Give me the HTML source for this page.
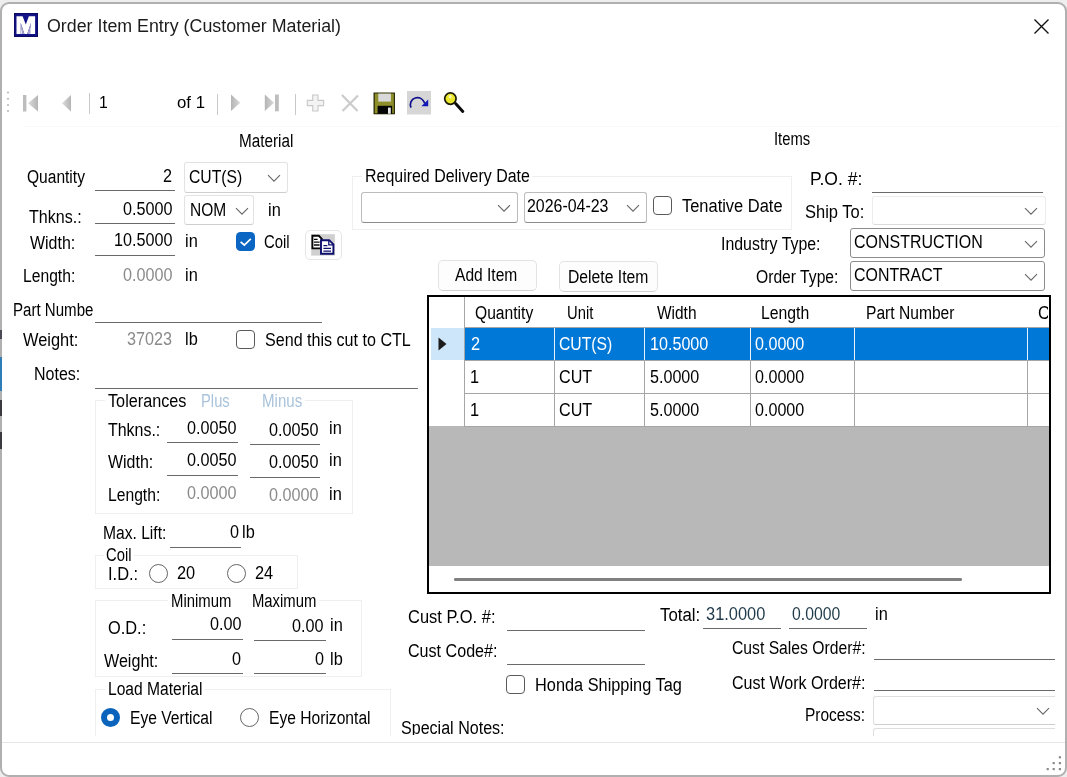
<!DOCTYPE html>
<html><head><meta charset="utf-8"><title>Order Item Entry</title>
<style>
html,body{margin:0;padding:0;}
body{width:1067px;height:777px;overflow:hidden;position:relative;background:#eeeeee;font-family:"Liberation Sans",sans-serif;}
.t{position:absolute;white-space:nowrap;line-height:20px;transform-origin:0 50%;display:block;}
.b{position:absolute;box-sizing:border-box;}
svg{position:absolute;overflow:visible;}
#w{position:absolute;left:0;top:0;width:1067px;height:777px;will-change:transform;}
</style></head><body><div id="w">
<div class="b" style="left:0px;top:2.2px;width:1067px;height:774.8px;background:#fff;border:2px solid #b0b0b0;border-radius:9px;"></div>
<div class="b" style="left:2px;top:741.5px;width:1063px;height:1px;background:#e7e7e7;"></div>
<svg style="left:14px;top:12.9px" width="24" height="24" viewBox="0 0 24 24"><rect width="24" height="24" fill="#0a0a64"/><rect x="1.2" y="1.2" width="21.6" height="21.6" fill="#14148a"/><path d="M2.5 20.9V3.2H8.6L11.8 11.6L14.9 3.2H21.1V20.9H16.9V10L13.2 20.9H10.4L6.7 10V20.9z" fill="#fff"/><path d="M6.7 10L10.4 20.9H8.4z M16.9 10L13.2 20.9H15.2z" fill="#a9a6d2"/><path d="M6.7 10L8.4 20.9H6.7z M16.9 10L15.2 20.9H16.9z" fill="#e6e5f4"/></svg>
<span class="t" style="left:47.0px;top:15.9px;font-size:17.5px;color:#1c1c1c;transform:scaleX(1.0180);">Order Item Entry (Customer Material)</span>
<svg style="left:1034px;top:19px" width="15" height="15" viewBox="0 0 15 15"><path d="M0.5 0.5L14.5 14.5M14.5 0.5L0.5 14.5" stroke="#111" stroke-width="1.4" fill="none"/></svg>
<svg style="left:0;top:88px" width="480" height="30" viewBox="0 88 480 30"><defs><linearGradient id="tg" x1="0" x2="1"><stop offset="0" stop-color="#dcdcdc"/><stop offset="1" stop-color="#b4b4b4"/></linearGradient><linearGradient id="tg2" x1="0" x2="1"><stop offset="0" stop-color="#b4b4b4"/><stop offset="1" stop-color="#d8d8d8"/></linearGradient></defs><g fill="#b5b5b5"><circle cx="8" cy="92.5" r="1"/><circle cx="8" cy="98.7" r="1"/><circle cx="8" cy="104.9" r="1"/><circle cx="8" cy="111" r="1"/></g><rect x="23" y="95" width="3.4" height="16.5" fill="#bdbdbd"/><path d="M38 95v16.5l-10-8.25z" fill="url(#tg)"/><path d="M71 95v16.5l-9-8.25z" fill="url(#tg)"/><rect x="89" y="93" width="1" height="21" fill="#c9c9c9"/><rect x="217" y="94" width="1" height="21" fill="#c9c9c9"/><path d="M231 94.5v16.5l9.2-8.25z" fill="url(#tg2)"/><path d="M264.8 94.5v16.5l9.2-8.25z" fill="url(#tg2)"/><rect x="275" y="94.5" width="3.8" height="16.8" fill="#bdbdbd"/><rect x="295" y="94" width="1" height="21" fill="#c9c9c9"/><path d="M312.7 95h5.3v5.4h5.6v5.2h-5.6v5.4h-5.3v-5.4h-5.4v-5.2h5.4z" fill="#f3f3f3" stroke="#c8c8c8" stroke-width="1.1"/><path d="M342 95L357.5 111M358 95.5L342.5 111" stroke="#cbcbcb" stroke-width="2.2" fill="none"/><rect x="373.5" y="92.5" width="21.5" height="21.8" fill="#2e2e0c"/><rect x="374.8" y="93.6" width="19" height="19.6" fill="#8e8e2a"/><rect x="378.3" y="93.6" width="12.6" height="8" fill="#d9d9d9"/><rect x="377.6" y="105.8" width="14.6" height="8" fill="#050505"/><rect x="388" y="107.6" width="2.8" height="6.2" fill="#e8e8e8"/><rect x="407" y="91" width="24" height="23.5" fill="#d6d6d6"/><path d="M411 107.6c-1.6-3.6 0-8.4 4.2-9.6 4.4-1.2 8 1.2 9.6 5.4" stroke="#10108c" stroke-width="1.7" fill="none"/><path d="M421.4 106.2h6.8v-6.6z" fill="#1218b8"/><path d="M455.6 103.6l7.2 7.8" stroke="#0c0c0c" stroke-width="3" stroke-linecap="round"/><circle cx="450.4" cy="98.6" r="5.7" fill="#ece82c" stroke="#1a1a08" stroke-width="1.7"/><circle cx="450.2" cy="96.8" r="1.7" fill="#f8f6a8"/></svg>
<span class="t" style="left:99.1px;top:92.6px;font-size:17px;color:#000;transform:scaleX(0.9300);">1</span>
<span class="t" style="left:177.0px;top:92.6px;font-size:17px;color:#000;transform:scaleX(0.9873);">of 1</span>
<div class="b" style="left:24px;top:125.5px;width:1036px;height:1px;background:#f8f8f8;"></div>
<span class="t" style="left:239.0px;top:131.3px;font-size:17.6px;color:#000;transform:scaleX(0.8677);">Material</span>
<span class="t" style="left:27.0px;top:166.5px;font-size:17.6px;color:#000;transform:scaleX(0.8838);">Quantity</span>
<span class="t" style="left:163.0px;top:166.3px;font-size:17.6px;color:#000;transform:scaleX(0.9200);">2</span>
<div class="b" style="left:95px;top:190px;width:80px;height:1px;background:#6a6a6a"></div>
<span class="t" style="left:28.7px;top:206.6px;font-size:17.6px;color:#000;transform:scaleX(0.9115);">Thkns.:</span>
<span class="t" style="left:122.8px;top:198.7px;font-size:17.6px;color:#000;transform:scaleX(0.9200);">0.5000</span>
<div class="b" style="left:95px;top:223px;width:80px;height:1px;background:#6a6a6a"></div>
<span class="t" style="left:29.7px;top:232.6px;font-size:17.6px;color:#000;transform:scaleX(0.9074);">Width:</span>
<span class="t" style="left:113.8px;top:230.2px;font-size:17.6px;color:#000;transform:scaleX(0.9200);">10.5000</span>
<div class="b" style="left:95px;top:255px;width:80px;height:1px;background:#6a6a6a"></div>
<span class="t" style="left:185.3px;top:230.7px;font-size:17.6px;color:#000;transform:scaleX(0.9300);">in</span>
<span class="t" style="left:22.7px;top:265.8px;font-size:17.6px;color:#000;transform:scaleX(0.8906);">Length:</span>
<span class="t" style="left:122.8px;top:265.2px;font-size:17.6px;color:#8a8a8a;transform:scaleX(0.9200);">0.0000</span>
<span class="t" style="left:185.3px;top:264.9px;font-size:17.6px;color:#000;transform:scaleX(0.9300);">in</span>
<span class="t" style="left:13.0px;top:299.9px;font-size:17.6px;color:#000;transform:scaleX(0.8568);">Part Numbe</span>
<div class="b" style="left:95px;top:322px;width:227px;height:1px;background:#6a6a6a"></div>
<span class="t" style="left:23.0px;top:329.9px;font-size:17.6px;color:#000;transform:scaleX(0.9320);">Weight:</span>
<span class="t" style="left:127.2px;top:328.9px;font-size:17.6px;color:#8a8a8a;transform:scaleX(0.9200);">37023</span>
<span class="t" style="left:185.3px;top:328.9px;font-size:17.6px;color:#000;transform:scaleX(0.9300);">lb</span>
<span class="t" style="left:34.0px;top:363.9px;font-size:17.6px;color:#000;transform:scaleX(0.9095);">Notes:</span>
<div class="b" style="left:95px;top:388px;width:323px;height:1px;background:#6a6a6a"></div>
<div class="b" style="left:184.3px;top:162px;width:103.5px;height:30.5px;background:#fff;border:1px solid #e2e2e2;border-bottom-color:#cfcfcf;border-radius:3px;"></div>
<span class="t" style="left:189.0px;top:167.4px;font-size:17.6px;color:#000;transform:scaleX(0.8938);">CUT(S)</span>
<svg style="left:267px;top:174px" width="14" height="9" viewBox="0 0 14 9"><path d="M1 1.2L7 7.2L13 1.2" stroke="#666" stroke-width="1.1" fill="none"/></svg>
<div class="b" style="left:184.3px;top:195px;width:70.2px;height:30.2px;background:#fff;border:1px solid #e2e2e2;border-bottom-color:#cfcfcf;border-radius:3px;"></div>
<span class="t" style="left:190.0px;top:199.9px;font-size:17.6px;color:#000;transform:scaleX(0.8817);">NOM</span>
<svg style="left:234.5px;top:206.8px" width="14" height="9" viewBox="0 0 14 9"><path d="M1 1.2L7 7.2L13 1.2" stroke="#666" stroke-width="1.1" fill="none"/></svg>
<span class="t" style="left:268.1px;top:199.9px;font-size:17.6px;color:#000;transform:scaleX(0.9300);">in</span>
<div class="b" style="left:236px;top:232px;width:19.3px;height:19.3px;background:#0a66c2;border-radius:4.5px;"></div>
<svg style="left:236px;top:232px" width="19" height="19" viewBox="0 0 19 19"><path d="M4.6 9.8L8.3 13L14.8 6.8" stroke="#fff" stroke-width="1.7" fill="none"/></svg>
<span class="t" style="left:264.0px;top:232.4px;font-size:17.6px;color:#000;transform:scaleX(0.8460);">Coil</span>
<div class="b" style="left:304.5px;top:229.5px;width:37px;height:30.5px;background:#fefefe;border:1px solid #e6e6e6;border-radius:5px;"></div>
<svg style="left:0;top:0" width="360" height="270" viewBox="0 0 360 270"><rect x="311.2" y="234.2" width="23.6" height="21.4" fill="#cfcfcf"/><path d="M312.4 235.8h6.4l3 3v9.6h-9.4z" fill="#fff" stroke="#050505" stroke-width="1.9"/><path d="M314 239.4h3.6M314 242.2h5.6M314 245h5.6" stroke="#050505" stroke-width="1.3"/><path d="M321 240.2h8.2l4.2 4.2v9.4h-12.4z" fill="#fff" stroke="#0e0e6e" stroke-width="1.9"/><path d="M328.8 240.4v4.4h4.4" fill="none" stroke="#0e0e6e" stroke-width="1.3"/><path d="M323.4 245.6h4M323.4 248.4h7.6M323.4 251.2h7.6" stroke="#0e0e6e" stroke-width="1.3"/></svg>
<div class="b" style="left:236px;top:330px;width:19px;height:19px;background:#fff;border:1.5px solid #5a5a5a;border-radius:4px;"></div>
<span class="t" style="left:265.0px;top:329.9px;font-size:17.6px;color:#000;transform:scaleX(0.9146);">Send this cut to CTL</span>
<div class="b" style="left:95px;top:400px;width:258px;height:114px;border:1px solid #efefef;"></div>
<div class="b" style="left:105px;top:398px;width:200px;height:8px;background:#fff;"></div>
<span class="t" style="left:108.0px;top:390.9px;font-size:17.6px;color:#000;transform:scaleX(0.9217);">Tolerances</span>
<span class="t" style="left:200.7px;top:390.9px;font-size:17.6px;color:#a9c3dc;transform:scaleX(0.8400);">Plus</span>
<span class="t" style="left:262.0px;top:390.9px;font-size:17.6px;color:#a9c3dc;transform:scaleX(0.8568);">Minus</span>
<span class="t" style="left:108.0px;top:419.9px;font-size:17.6px;color:#000;transform:scaleX(0.9063);">Thkns.:</span>
<span class="t" style="left:187.3px;top:417.9px;font-size:17.6px;color:#000;transform:scaleX(0.9200);">0.0050</span>
<div class="b" style="left:167px;top:441.8px;width:71px;height:1px;background:#6a6a6a"></div>
<span class="t" style="left:269.3px;top:419.9px;font-size:17.6px;color:#000;transform:scaleX(0.9200);">0.0050</span>
<div class="b" style="left:250px;top:443.6px;width:70px;height:1px;background:#6a6a6a"></div>
<span class="t" style="left:329.2px;top:417.9px;font-size:17.6px;color:#000;transform:scaleX(0.9300);">in</span>
<span class="t" style="left:108.0px;top:451.9px;font-size:17.6px;color:#000;transform:scaleX(0.9074);">Width:</span>
<span class="t" style="left:187.3px;top:449.9px;font-size:17.6px;color:#000;transform:scaleX(0.9200);">0.0050</span>
<div class="b" style="left:167px;top:474.6px;width:71px;height:1px;background:#6a6a6a"></div>
<span class="t" style="left:269.3px;top:451.9px;font-size:17.6px;color:#000;transform:scaleX(0.9200);">0.0050</span>
<div class="b" style="left:250px;top:476.5px;width:70px;height:1px;background:#6a6a6a"></div>
<span class="t" style="left:329.2px;top:449.9px;font-size:17.6px;color:#000;transform:scaleX(0.9300);">in</span>
<span class="t" style="left:108.0px;top:484.9px;font-size:17.6px;color:#000;transform:scaleX(0.8906);">Length:</span>
<span class="t" style="left:187.3px;top:482.9px;font-size:17.6px;color:#8a8a8a;transform:scaleX(0.9200);">0.0000</span>
<span class="t" style="left:269.3px;top:484.9px;font-size:17.6px;color:#8a8a8a;transform:scaleX(0.9200);">0.0000</span>
<span class="t" style="left:329.2px;top:483.9px;font-size:17.6px;color:#000;transform:scaleX(0.9300);">in</span>
<span class="t" style="left:103.0px;top:522.9px;font-size:17.6px;color:#000;transform:scaleX(0.8875);">Max. Lift:</span>
<span class="t" style="left:230.0px;top:521.9px;font-size:17.6px;color:#000;transform:scaleX(0.9200);">0</span>
<div class="b" style="left:170px;top:547px;width:71px;height:1px;background:#6a6a6a"></div>
<span class="t" style="left:242.2px;top:521.9px;font-size:17.6px;color:#000;transform:scaleX(0.9300);">lb</span>
<div class="b" style="left:95px;top:555px;width:203px;height:34px;border:1px solid #efefef;"></div>
<div class="b" style="left:104px;top:554px;width:30px;height:8px;background:#fff;"></div>
<span class="t" style="left:106.3px;top:544.9px;font-size:17.6px;color:#000;transform:scaleX(0.8400);">Coil</span>
<span class="t" style="left:108.0px;top:563.9px;font-size:17.6px;color:#000;transform:scaleX(0.9348);">I.D.:</span>
<div class="b" style="left:149px;top:563.5px;width:19.4px;height:19.4px;background:#fff;border:1.4px solid #666;border-radius:50%;"></div>
<span class="t" style="left:177.4px;top:562.9px;font-size:17.6px;color:#000;transform:scaleX(0.9300);">20</span>
<div class="b" style="left:227px;top:563.5px;width:19.4px;height:19.4px;background:#fff;border:1.4px solid #666;border-radius:50%;"></div>
<span class="t" style="left:255.4px;top:562.9px;font-size:17.6px;color:#000;transform:scaleX(0.9300);">24</span>
<div class="b" style="left:95px;top:600px;width:267px;height:77px;border:1px solid #efefef;"></div>
<div class="b" style="left:168px;top:597px;width:151px;height:8px;background:#fff;"></div>
<span class="t" style="left:171.0px;top:590.9px;font-size:17.6px;color:#000;transform:scaleX(0.8454);">Minimum</span>
<span class="t" style="left:252.0px;top:590.9px;font-size:17.6px;color:#000;transform:scaleX(0.8438);">Maximum</span>
<span class="t" style="left:108.0px;top:617.9px;font-size:17.6px;color:#000;transform:scaleX(0.9304);">O.D.:</span>
<span class="t" style="left:209.7px;top:613.9px;font-size:17.6px;color:#000;transform:scaleX(0.9200);">0.00</span>
<div class="b" style="left:172px;top:639px;width:71px;height:1px;background:#6a6a6a"></div>
<span class="t" style="left:292.2px;top:615.9px;font-size:17.6px;color:#000;transform:scaleX(0.9200);">0.00</span>
<div class="b" style="left:254px;top:640px;width:72px;height:1px;background:#6a6a6a"></div>
<span class="t" style="left:330.2px;top:614.9px;font-size:17.6px;color:#000;transform:scaleX(0.9300);">in</span>
<span class="t" style="left:104.0px;top:650.9px;font-size:17.6px;color:#000;transform:scaleX(0.9150);">Weight:</span>
<span class="t" style="left:232.0px;top:648.9px;font-size:17.6px;color:#000;transform:scaleX(0.9200);">0</span>
<div class="b" style="left:172px;top:673px;width:71px;height:1px;background:#6a6a6a"></div>
<span class="t" style="left:314.5px;top:648.9px;font-size:17.6px;color:#000;transform:scaleX(0.9200);">0</span>
<div class="b" style="left:254px;top:673px;width:72px;height:1px;background:#6a6a6a"></div>
<span class="t" style="left:330.2px;top:648.9px;font-size:17.6px;color:#000;transform:scaleX(0.9300);">lb</span>
<div class="b" style="left:95px;top:688.5px;width:296px;height:47.5px;border:1px solid #efefef;border-bottom:none;"></div>
<div class="b" style="left:105px;top:686px;width:100px;height:8px;background:#fff;"></div>
<span class="t" style="left:108.0px;top:678.9px;font-size:17.6px;color:#000;transform:scaleX(0.8865);">Load Material</span>
<div class="b" style="left:101px;top:707.5px;width:19.4px;height:19.4px;background:#fff;border:6px solid #0a64bc;border-radius:50%;"></div>
<span class="t" style="left:130.0px;top:707.9px;font-size:17.6px;color:#000;transform:scaleX(0.8874);">Eye Vertical</span>
<div class="b" style="left:240px;top:707.5px;width:19.4px;height:19.4px;background:#fff;border:1.4px solid #666;border-radius:50%;"></div>
<span class="t" style="left:269.0px;top:707.9px;font-size:17.6px;color:#000;transform:scaleX(0.8875);">Eye Horizontal</span>
<span class="t" style="left:774.0px;top:128.9px;font-size:17.6px;color:#000;transform:scaleX(0.8415);">Items</span>
<div class="b" style="left:352px;top:175.5px;width:440px;height:54px;border:1px solid #efefef;"></div>
<div class="b" style="left:362px;top:172px;width:170px;height:10px;background:#fff;"></div>
<span class="t" style="left:365.0px;top:165.9px;font-size:17.6px;color:#000;transform:scaleX(0.9065);">Required Delivery Date</span>
<div class="b" style="left:361px;top:191.8px;width:156.5px;height:30.8px;background:#fff;border:1px solid #bcbcbc;border-bottom-color:#8c8c8c;border-radius:3px;"></div>
<svg style="left:497px;top:204px" width="14" height="9" viewBox="0 0 14 9"><path d="M1 1.2L7 7.2L13 1.2" stroke="#666" stroke-width="1.1" fill="none"/></svg>
<div class="b" style="left:524px;top:191.8px;width:123px;height:30.8px;background:#fff;border:1px solid #bcbcbc;border-bottom-color:#8c8c8c;border-radius:3px;"></div>
<span class="t" style="left:527.0px;top:195.9px;font-size:17.6px;color:#000;transform:scaleX(0.9049);">2026-04-23</span>
<svg style="left:626px;top:204px" width="14" height="9" viewBox="0 0 14 9"><path d="M1 1.2L7 7.2L13 1.2" stroke="#666" stroke-width="1.1" fill="none"/></svg>
<div class="b" style="left:653px;top:196px;width:19px;height:19px;background:#fff;border:1.5px solid #5a5a5a;border-radius:4px;"></div>
<span class="t" style="left:682.0px;top:195.9px;font-size:17.6px;color:#000;transform:scaleX(0.9344);">Tenative Date</span>
<span class="t" style="left:810.0px;top:168.9px;font-size:17.6px;color:#000;transform:scaleX(0.9961);">P.O. #:</span>
<div class="b" style="left:872px;top:192px;width:171px;height:1px;background:#6a6a6a"></div>
<span class="t" style="left:805.0px;top:201.9px;font-size:17.6px;color:#000;transform:scaleX(0.9377);">Ship To:</span>
<div class="b" style="left:872px;top:196.3px;width:173.5px;height:29px;background:#fff;border:1px solid #ececec;border-bottom-color:#dcdcdc;border-radius:3px;"></div>
<svg style="left:1024px;top:207px" width="14" height="9" viewBox="0 0 14 9"><path d="M1 1.2L7 7.2L13 1.2" stroke="#666" stroke-width="1.1" fill="none"/></svg>
<span class="t" style="left:721.0px;top:233.9px;font-size:17.6px;color:#000;transform:scaleX(0.9033);">Industry Type:</span>
<div class="b" style="left:850px;top:228px;width:195px;height:30px;background:#fff;border:1px solid #8c8c8c;border-radius:3px;"></div>
<span class="t" style="left:854.0px;top:231.9px;font-size:17.6px;color:#000;transform:scaleX(0.9080);">CONSTRUCTION</span>
<svg style="left:1024px;top:240px" width="14" height="9" viewBox="0 0 14 9"><path d="M1 1.2L7 7.2L13 1.2" stroke="#666" stroke-width="1.1" fill="none"/></svg>
<span class="t" style="left:756.0px;top:266.9px;font-size:17.6px;color:#000;transform:scaleX(0.8905);">Order Type:</span>
<div class="b" style="left:850px;top:261px;width:195px;height:30px;background:#fff;border:1px solid #8c8c8c;border-radius:3px;"></div>
<span class="t" style="left:854.0px;top:264.9px;font-size:17.6px;color:#000;transform:scaleX(0.9052);">CONTRACT</span>
<svg style="left:1024px;top:273px" width="14" height="9" viewBox="0 0 14 9"><path d="M1 1.2L7 7.2L13 1.2" stroke="#666" stroke-width="1.1" fill="none"/></svg>
<div class="b" style="left:438px;top:259.5px;width:98.5px;height:31.5px;background:#fdfdfd;border:1px solid #e3e3e3;border-bottom-color:#d2d2d2;border-radius:5px;"></div>
<span class="t" style="left:455.0px;top:264.9px;font-size:17.6px;color:#000;transform:scaleX(0.8853);">Add Item</span>
<div class="b" style="left:559px;top:260.5px;width:99px;height:31px;background:#fdfdfd;border:1px solid #e3e3e3;border-bottom-color:#d2d2d2;border-radius:5px;"></div>
<span class="t" style="left:568.0px;top:266.9px;font-size:17.6px;color:#000;transform:scaleX(0.8940);">Delete Item</span>
<div class="b" style="left:427px;top:295px;width:624px;height:298.5px;background:#fff;border:2px solid #000;"></div>
<div class="b" style="left:429px;top:426px;width:620px;height:140px;background:#b8b8b8;"></div>
<div class="b" style="left:464px;top:297px;width:1px;height:129px;background:#a6a6a6;"></div>
<div class="b" style="left:554px;top:328px;width:1px;height:98px;background:#a6a6a6;"></div>
<div class="b" style="left:644px;top:328px;width:1px;height:98px;background:#a6a6a6;"></div>
<div class="b" style="left:750px;top:328px;width:1px;height:98px;background:#a6a6a6;"></div>
<div class="b" style="left:854px;top:328px;width:1px;height:98px;background:#a6a6a6;"></div>
<div class="b" style="left:1027px;top:328px;width:1px;height:98px;background:#a6a6a6;"></div>
<div class="b" style="left:464px;top:327px;width:585px;height:1px;background:#a6a6a6;"></div>
<div class="b" style="left:464px;top:360px;width:585px;height:1px;background:#a6a6a6;"></div>
<div class="b" style="left:464px;top:393px;width:585px;height:1px;background:#a6a6a6;"></div>
<div class="b" style="left:464px;top:426px;width:585px;height:1px;background:#a6a6a6;"></div>
<div class="b" style="left:465px;top:328px;width:584px;height:32px;background:#0078d7;"></div>
<div class="b" style="left:554px;top:328px;width:1px;height:32px;background:#e8f2fb;"></div>
<div class="b" style="left:644px;top:328px;width:1px;height:32px;background:#e8f2fb;"></div>
<div class="b" style="left:750px;top:328px;width:1px;height:32px;background:#e8f2fb;"></div>
<div class="b" style="left:854px;top:328px;width:1px;height:32px;background:#e8f2fb;"></div>
<div class="b" style="left:1027px;top:328px;width:1px;height:32px;background:#e8f2fb;"></div>
<div class="b" style="left:431px;top:328px;width:33px;height:32px;background:#cde6f9;"></div>
<svg style="left:437.5px;top:337px" width="9" height="14" viewBox="0 0 9 14"><path d="M0.5 0.5L8.5 7L0.5 13.5z" fill="#1c1c1c"/></svg>
<span class="t" style="left:475.4px;top:302.9px;font-size:17.6px;color:#000;transform:scaleX(0.8884);">Quantity</span>
<span class="t" style="left:566.5px;top:302.9px;font-size:17.6px;color:#000;transform:scaleX(0.8400);">Unit</span>
<span class="t" style="left:656.7px;top:302.9px;font-size:17.6px;color:#000;transform:scaleX(0.8785);">Width</span>
<span class="t" style="left:761.0px;top:302.9px;font-size:17.6px;color:#000;transform:scaleX(0.8967);">Length</span>
<span class="t" style="left:866.0px;top:302.9px;font-size:17.6px;color:#000;transform:scaleX(0.8871);">Part Number</span>
<span class="t" style="left:1037.6px;top:302.9px;font-size:17.6px;color:#000;transform:scaleX(0.9300);clip-path:inset(0 2px 0 0);">C</span>
<span class="t" style="left:470.5px;top:333.9px;font-size:17.6px;color:#fff;transform:scaleX(0.9300);">2</span>
<span class="t" style="left:559.0px;top:333.9px;font-size:17.6px;color:#fff;transform:scaleX(0.8938);">CUT(S)</span>
<span class="t" style="left:650.0px;top:333.9px;font-size:17.6px;color:#fff;transform:scaleX(0.9168);">10.5000</span>
<span class="t" style="left:755.0px;top:333.9px;font-size:17.6px;color:#fff;transform:scaleX(0.9154);">0.0000</span>
<span class="t" style="left:470.0px;top:366.9px;font-size:17.6px;color:#000;transform:scaleX(0.9300);">1</span>
<span class="t" style="left:559.0px;top:366.9px;font-size:17.6px;color:#000;transform:scaleX(0.9175);">CUT</span>
<span class="t" style="left:650.0px;top:366.9px;font-size:17.6px;color:#000;transform:scaleX(0.9154);">5.0000</span>
<span class="t" style="left:755.0px;top:366.9px;font-size:17.6px;color:#000;transform:scaleX(0.9154);">0.0000</span>
<span class="t" style="left:470.0px;top:399.9px;font-size:17.6px;color:#000;transform:scaleX(0.9300);">1</span>
<span class="t" style="left:559.0px;top:399.9px;font-size:17.6px;color:#000;transform:scaleX(0.9175);">CUT</span>
<span class="t" style="left:650.0px;top:399.9px;font-size:17.6px;color:#000;transform:scaleX(0.9154);">5.0000</span>
<span class="t" style="left:755.0px;top:399.9px;font-size:17.6px;color:#000;transform:scaleX(0.9154);">0.0000</span>
<div class="b" style="left:453.5px;top:578.3px;width:508.5px;height:2.6px;background:#808080;border-radius:1.3px;"></div>
<span class="t" style="left:408.0px;top:606.9px;font-size:17.6px;color:#000;transform:scaleX(0.9350);">Cust P.O. #:</span>
<div class="b" style="left:507px;top:630px;width:138px;height:1px;background:#6a6a6a"></div>
<span class="t" style="left:660.0px;top:605.4px;font-size:17.6px;color:#000;transform:scaleX(0.9563);">Total:</span>
<span class="t" style="left:706.0px;top:603.9px;font-size:17.6px;color:#1f3a4a;transform:scaleX(0.9326);">31.0000</span>
<div class="b" style="left:703px;top:628px;width:78px;height:1px;background:#6a6a6a"></div>
<span class="t" style="left:792.0px;top:603.9px;font-size:17.6px;color:#1f3a4a;transform:scaleX(0.8967);">0.0000</span>
<div class="b" style="left:789px;top:628px;width:78px;height:1px;background:#6a6a6a"></div>
<span class="t" style="left:875.2px;top:603.9px;font-size:17.6px;color:#000;transform:scaleX(0.9300);">in</span>
<span class="t" style="left:408.0px;top:640.9px;font-size:17.6px;color:#000;transform:scaleX(0.9149);">Cust Code#:</span>
<div class="b" style="left:507px;top:664px;width:138px;height:1px;background:#6a6a6a"></div>
<span class="t" style="left:732.0px;top:638.3px;font-size:17.6px;color:#000;transform:scaleX(0.8924);">Cust Sales Order#:</span>
<div class="b" style="left:873.5px;top:659.3px;width:181.20000000000005px;height:1px;background:#6a6a6a"></div>
<div class="b" style="left:506px;top:675px;width:19px;height:19px;background:#fff;border:1.5px solid #5a5a5a;border-radius:4px;"></div>
<span class="t" style="left:535.0px;top:674.9px;font-size:17.6px;color:#000;transform:scaleX(0.9282);">Honda Shipping Tag</span>
<span class="t" style="left:732.0px;top:672.9px;font-size:17.6px;color:#000;transform:scaleX(0.9124);">Cust Work Order#:</span>
<div class="b" style="left:873.5px;top:690.3px;width:181.20000000000005px;height:1px;background:#6a6a6a"></div>
<span class="t" style="left:805.0px;top:704.5px;font-size:17.6px;color:#000;transform:scaleX(0.8784);">Process:</span>
<div class="b" style="left:872.6px;top:695.5px;width:182.4px;height:29px;background:#fff;border:1px solid #dedede;border-right:none;border-bottom-color:#cdcdcd;border-radius:3px 0 0 3px;"></div>
<svg style="left:1035.7px;top:706.6px" width="14" height="9" viewBox="0 0 14 9"><path d="M1 1.2L7 7.2L13 1.2" stroke="#666" stroke-width="1.1" fill="none"/></svg>
<div class="b" style="left:872.6px;top:727.6px;width:182.4px;height:8.5px;background:#fff;border:1px solid #dedede;border-right:none;border-bottom:none;border-radius:3px 0 0 0;"></div>
<span class="t" style="left:401.0px;top:717.9px;font-size:17.6px;color:#000;transform:scaleX(0.9129);clip-path:inset(0 0 3px 0);">Special Notes:</span>
<svg style="left:0;top:0" width="1067" height="777" viewBox="0 0 1067 777"><g fill="#8c8c8c"><rect x="1058.8" y="756.2" width="2.2" height="2.2"/><rect x="1052.6" y="762" width="2.2" height="2.2"/><rect x="1058.8" y="762" width="2.2" height="2.2"/><rect x="1046.6" y="768" width="2.2" height="2.2"/><rect x="1052.6" y="768" width="2.2" height="2.2"/><rect x="1058.8" y="768" width="2.2" height="2.2"/></g></svg>
<div class="b" style="left:0px;top:330px;width:2px;height:9px;background:#4a4a55;"></div>
<div class="b" style="left:0px;top:357px;width:2px;height:34px;background:#2f7db8;"></div>
<div class="b" style="left:0px;top:400px;width:2px;height:16px;background:#3a3a3e;"></div>
<div class="b" style="left:0px;top:432px;width:2px;height:17px;background:#3a3a3e;"></div>
</div></body></html>
